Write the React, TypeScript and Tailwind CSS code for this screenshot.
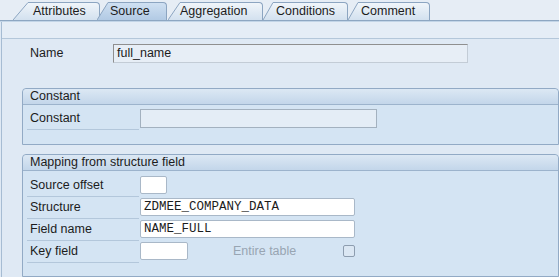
import React from "react";

interface Tab {
  label: string;
  slant: number;
  body: string;
  pad: string;
  shift: string;
  active?: boolean;
}

const tabs: Tab[] = [
  { label: "Attributes", slant: 15, body: "w-[72px]", pad: "pl-[5px]", shift: "ml-[13px]" },
  { label: "Source", slant: 11, body: "w-[59px]", pad: "pl-[2px]", shift: "ml-[-3px]", active: true },
  { label: "Aggregation", slant: 12, body: "w-[83px]", pad: "pl-[0px]", shift: "ml-[1px]" },
  { label: "Conditions", slant: 10, body: "w-[75px]", pad: "pl-[3px]", shift: "ml-[0px]" },
  { label: "Comment", slant: 10, body: "w-[72px]", pad: "pl-[3px]", shift: "ml-[0px]" },
];

const TabItem = ({ tab, idx }: { tab: Tab; idx: number }) => {
  const top = tab.active ? "#cfe0f2" : "#f0f5fa";
  const bottom = tab.active ? "#b2cae4" : "#d3e1ef";
  const gid = "tabgrad" + idx;
  return (
    <div className={`flex h-[18px] ${tab.shift} ${tab.active ? "relative z-10" : ""}`}>
      <svg width={tab.slant} height={18} className="block shrink-0">
        <defs>
          <linearGradient id={gid} x1="0" y1="0" x2="0" y2="1">
            <stop offset="0" stopColor={top} />
            <stop offset="1" stopColor={bottom} />
          </linearGradient>
        </defs>
        <polygon points={`0,18 ${tab.slant},0 ${tab.slant},18`} fill={`url(#${gid})`} />
        <line x1={0} y1={18} x2={tab.slant} y2={0.5} stroke="#8ca5c1" strokeWidth={1} />
      </svg>
      <div
        className={`${tab.body} ${tab.pad} h-[18px] flex items-center border-t border-r border-[#8ca5c1] rounded-tr-[4px] bg-gradient-to-b ${
          tab.active ? "from-[#cfe0f2] to-[#b2cae4]" : "from-[#f0f5fa] to-[#d3e1ef]"
        } text-[12.5px] text-[#1c1c1c] leading-none`}
      >
        {tab.label}
      </div>
    </div>
  );
};

const Row = ({ label, children }: { label: string; children?: React.ReactNode }) => (
  <div className="flex h-[22px] ml-[4px]">
    <div className="w-[112px] h-[22px] pl-[3px] flex items-center border-b border-[#b3c7db] text-[12.5px] text-[#1c1c1c]">
      {label}
    </div>
    <div className="ml-[1px] flex items-start pt-[1px]">{children}</div>
  </div>
);

const GroupBox = ({ title, children, className }: { title: string; children: React.ReactNode; className?: string }) => (
  <div className={`ml-[20px] w-[537px] border border-[#92aac5] rounded-t-[4px] bg-[#d4e4f3] ${className ?? ""}`}>
    <div className="h-[16px] pl-[7px] flex items-center border-b border-[#9cb3cc] rounded-t-[4px] bg-gradient-to-b from-[#dce8f4] to-[#c3d6ea] text-[12.5px] text-[#1c1c1c]">
      {title}
    </div>
    {children}
  </div>
);

const whiteInput =
  "h-[18px] bg-white border border-[#a9b8c8] rounded-[2px] px-[3px] flex items-center text-[12.5px] text-[#1c1c1c] font-['Liberation_Mono',monospace]";

export default function App() {
  return (
    <div className="w-[559px] h-[277px] overflow-hidden bg-[#dfe9f4] font-['Liberation_Sans',Arial,sans-serif]">
      {/* tab strip */}
      <div className="flex items-end pt-[2px] h-[20px] bg-[#e6edf5]">
        {tabs.map((t, i) => (
          <TabItem key={t.label} tab={t} idx={i} />
        ))}
      </div>
      <div className="h-[1px] bg-[#8ea7c2]" />
      <div className="h-[1px] bg-[#c3d5e7]" />

      <div className="ml-[1px] border-l border-[#a6bcd3] h-full">
        <div className="h-[17px] bg-[#e5edf6] border-b border-[#b4c7da]" />

        {/* name */}
        <div className="flex items-center pl-[28px] pt-[4px] h-[24px]">
          <div className="w-[83px] text-[12.5px] text-[#1c1c1c]">Name</div>
          <div className="w-[355px] h-[19px] bg-[#e7eef6] border border-[#c3ccd6] border-t-[#8f8f8f] border-l-[#8f8f8f] px-[3px] flex items-center text-[12.5px] text-[#1c1c1c]">
            full_name
          </div>
        </div>

        <GroupBox title="Constant" className="mt-[25px] pb-[14px]">
          <div className="pt-[3px]">
            <Row label="Constant">
              <div className="w-[237px] h-[19px] bg-[#e4edf6] border border-[#a3b1bf]" />
            </Row>
          </div>
        </GroupBox>

        <GroupBox title="Mapping from structure field" className="mt-[9px] pb-[13px]">
          <div className="pt-[4px]">
            <Row label="Source offset">
              <div className={`${whiteInput} w-[27px]`} />
            </Row>
            <Row label="Structure">
              <div className={`${whiteInput} w-[215px]`}>ZDMEE_COMPANY_DATA</div>
            </Row>
            <Row label="Field name">
              <div className={`${whiteInput} w-[215px]`}>NAME_FULL</div>
            </Row>
            <Row label="Key field">
              <div className="flex items-center">
                <div className={`${whiteInput} w-[48px]`} />
                <div className="ml-[45px] w-[110px] text-[12.5px] text-[#98a5b2] leading-[18px]">Entire table</div>
                <div className="w-[12px] h-[12px] border border-[#8d9daf] rounded-[2px] bg-[#dbe7f3]" />
              </div>
            </Row>
          </div>
        </GroupBox>
      </div>
    </div>
  );
}
